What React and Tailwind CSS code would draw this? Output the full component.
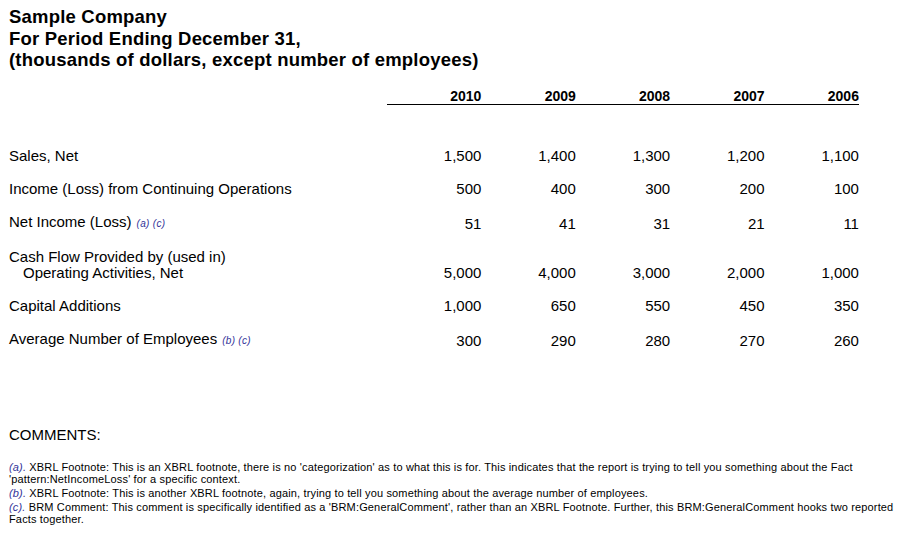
import React from "react";

const years = ["2010", "2009", "2008", "2007", "2006"];

const rows = [
  { label: "Sales, Net", values: ["1,500", "1,400", "1,300", "1,200", "1,100"] },
  { label: "Income (Loss) from Continuing Operations", values: ["500", "400", "300", "200", "100"] },
  { label: "Net Income (Loss)", notes: "(a) (c)", values: ["51", "41", "31", "21", "11"] },
  {
    label: "Cash Flow Provided by (used in)",
    sub: "Operating Activities, Net",
    values: ["5,000", "4,000", "3,000", "2,000", "1,000"],
  },
  { label: "Capital Additions", values: ["1,000", "650", "550", "450", "350"] },
  { label: "Average Number of Employees", notes: "(b) (c)", values: ["300", "290", "280", "270", "260"] },
];

const footnotes = [
  {
    mark: "(a).",
    text: " XBRL Footnote: This is an XBRL footnote, there is no 'categorization' as to what this is for. This indicates that the report is trying to tell you something about the Fact 'pattern:NetIncomeLoss' for a specific context.",
  },
  {
    mark: "(b).",
    text: " XBRL Footnote: This is another XBRL footnote, again, trying to tell you something about the average number of employees.",
  },
  {
    mark: "(c).",
    text: " BRM Comment: This comment is specifically identified as a 'BRM:GeneralComment', rather than an XBRL Footnote. Further, this BRM:GeneralComment hooks two reported Facts together.",
  },
];

export default function App() {
  return (
    <div className="w-[903px] h-[539px] bg-white text-black font-['Liberation_Sans',Arial,sans-serif] pl-[9px] pr-[6px] pt-[6px] overflow-hidden">
      {/* heading */}
      <div className="text-[18.5px] leading-[21.5px] font-bold tracking-[0.2px]">
        <p>Sample Company</p>
        <p>For Period Ending December 31,</p>
        <p>(thousands of dollars, except number of employees)</p>
      </div>

      {/* column headers */}
      <div className="grid grid-cols-[378px_repeat(5,94.4px)] mt-[18px]">
        <div />
        {years.map((y) => (
          <div key={y} className="text-right text-[14px] leading-[15px] font-bold border-b-[1.5px] border-black">
            {y}
          </div>
        ))}
      </div>

      {/* data rows */}
      <div className="mt-[35px]">
        {rows.map((r) => (
          <div key={r.label} className="grid grid-cols-[378px_repeat(5,94.4px)] items-end text-[15px] leading-[16px] py-[8.5px]">
            <div>
              <p>
                {r.label}
                {r.notes && <span className="italic text-[10px] text-[#333399] ml-[5px] tracking-[0.3px]">{r.notes}</span>}
              </p>
              {r.sub && <p className="pl-[14px]">{r.sub}</p>}
            </div>
            {r.values.map((v, i) => (
              <div key={i} className="text-right">
                {v}
              </div>
            ))}
          </div>
        ))}
      </div>

      {/* comments */}
      <p className="text-[15px] leading-[16px] mt-[69px]">COMMENTS:</p>
      <div className="mt-[18px] text-[11px] leading-[12px] tracking-[0.15px] flex flex-col gap-[2px] pr-[2px]">
        {footnotes.map((f) => (
          <p key={f.mark}>
            <span className="italic text-[#333399]">{f.mark}</span>
            {f.text}
          </p>
        ))}
      </div>
    </div>
  );
}
